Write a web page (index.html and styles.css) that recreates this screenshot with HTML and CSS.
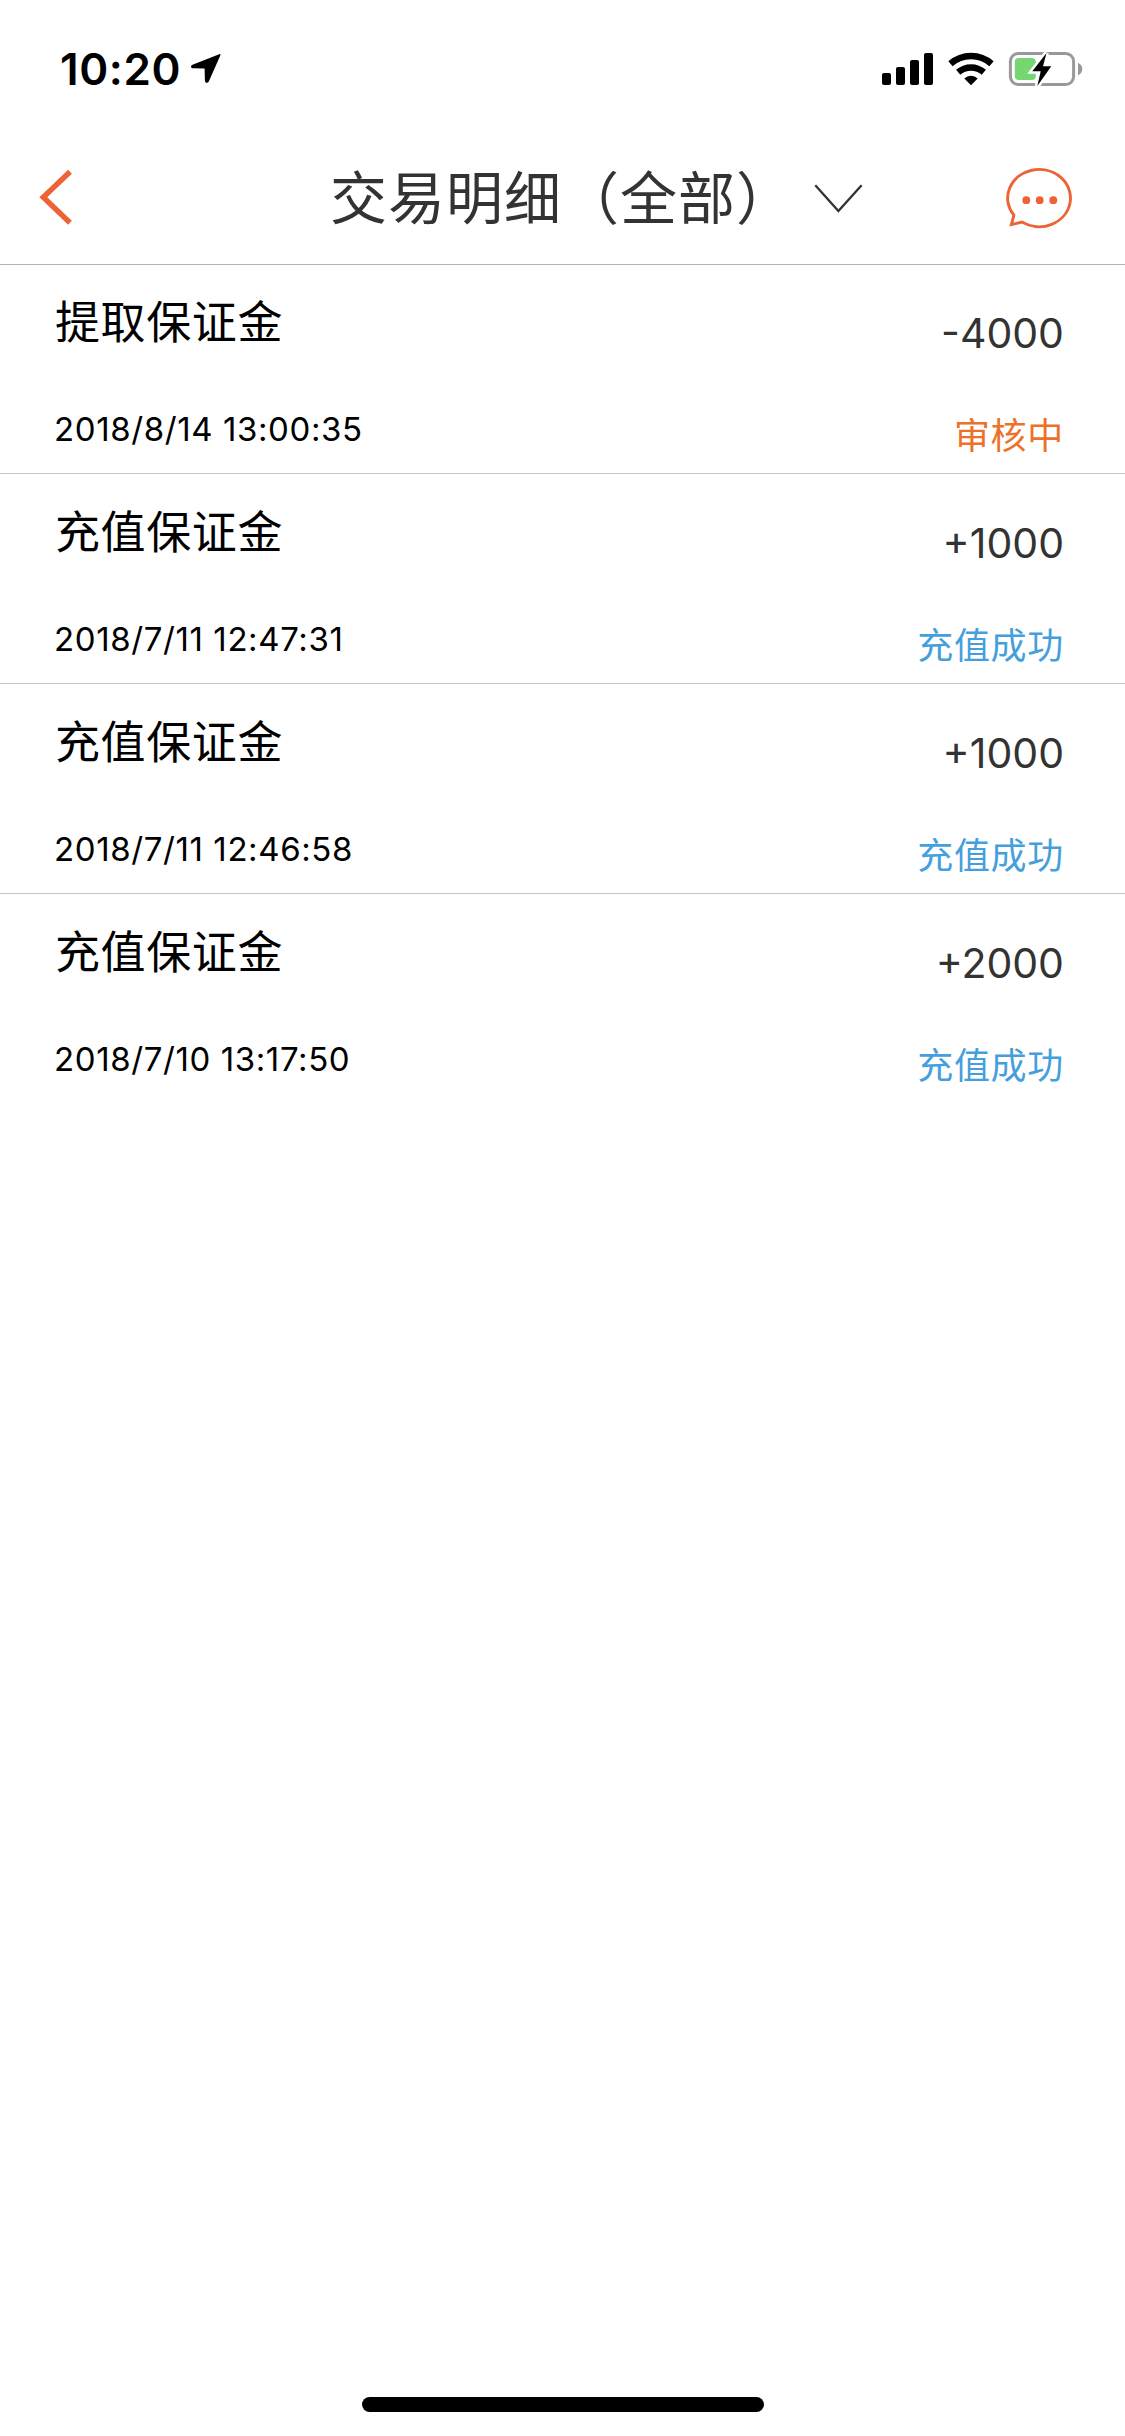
FILE: index.html
```html
<!DOCTYPE html>
<html lang="zh-CN">
<head>
<meta charset="utf-8">
<title>交易明细</title>
<link rel="stylesheet" href="styles.css">
</head>
<body>
<div class="screen">
  <div class="status-bar">
    <div class="clock">
      <span class="time">10:20</span>
      <svg class="location" width="32" height="32" viewBox="0 0 32 32"><path d="M29.2 1.2 2.5 11.8C.3 12.8.7 15.3 3 15.3L14.6 15.5 14.9 27.5C15 30.3 17.9 30.5 18.9 28.3L30.3 2.6C30.7 1.5 30.2.9 29.2 1.2Z"/></svg>
    </div>
    <svg class="indicators" width="206" height="36" viewBox="880 51 206 36">
      <rect x="882" y="73" width="9" height="12" rx="2"/>
      <rect x="896" y="67" width="9" height="18" rx="2"/>
      <rect x="910" y="60" width="9" height="25" rx="2"/>
      <rect x="924" y="53" width="9" height="32" rx="2"/>
      <g class="wifi">
        <path d="M950.5 63.8A31 31 0 0 1 991.5 63.8"/>
        <path d="M958.2 72.2A19.5 19.5 0 0 1 983.8 72.2"/>
      </g>
      <path d="M971 85.2 964.3 78.4A9.6 9.6 0 0 1 977.7 78.4Z"/>
      <rect class="battery-shell" x="1010.4" y="53.4" width="63.2" height="31.2" rx="8"/>
      <path class="battery-tip" d="M1078 62.7C1080.7 64 1082.3 66.2 1082.3 69S1080.7 74 1078 75.3Z"/>
      <rect class="battery-level" x="1014.8" y="58" width="21" height="22" rx="4"/>
      <path class="bolt" d="M1046.5 53 1032.3 71.2H1040.7L1037.3 86 1051.3 66.2H1043Z"/>
    </svg>
  </div>

  <header class="nav">
    <svg class="back" width="36" height="58" viewBox="38 168 36 58"><path d="M70 171.7 43.3 197.2 70 222.7"/></svg>
    <div class="nav-title">
      <h1>交易明细（全部）</h1>
      <svg class="chevron" width="50" height="32" viewBox="813 185 50 32"><path d="M815.3 187.2 838.4 213 861.6 187.2"/></svg>
    </div>
    <svg class="message" width="70" height="64" viewBox="1004 166 70 64">
      <path class="bubble" d="M1013.9 215.2A31.4 28.6 0 1 1 1022 222.1L1011.4 224.6Z"/>
      <circle cx="1026.3" cy="200.2" r="3.9"/><circle cx="1039.7" cy="200.2" r="3.9"/><circle cx="1053.3" cy="200.2" r="3.9"/>
    </svg>
  </header>

  <ul class="records">
    <li class="record">
      <div class="info"><span class="type">提取保证金</span><span class="date">2018/8/14 13:00:35</span></div>
      <div class="result"><span class="amount">-4000</span><span class="state pending">审核中</span></div>
    </li>
    <li class="record">
      <div class="info"><span class="type">充值保证金</span><span class="date">2018/7/11 12:47:31</span></div>
      <div class="result"><span class="amount">+1000</span><span class="state">充值成功</span></div>
    </li>
    <li class="record">
      <div class="info"><span class="type">充值保证金</span><span class="date">2018/7/11 12:46:58</span></div>
      <div class="result"><span class="amount">+1000</span><span class="state">充值成功</span></div>
    </li>
    <li class="record">
      <div class="info"><span class="type">充值保证金</span><span class="date">2018/7/10 13:17:50</span></div>
      <div class="result"><span class="amount">+2000</span><span class="state">充值成功</span></div>
    </li>
  </ul>

  <div class="home-indicator"></div>
</div>
</body>
</html>
```
FILE: styles.css
```css
* {
  box-sizing: border-box;
}

body {
  margin: 0;
  background: #fff;
  font-family: Inter, "Noto Sans CJK SC", sans-serif;
  color: #000;
}

.screen {
  display: flex;
  flex-direction: column;
  width: 1125px;
  height: 2436px;
  overflow: hidden;
}

svg {
  display: block;
  flex: none;
}

.status-bar {
  display: flex;
  justify-content: space-between;
  align-items: flex-start;
  height: 132px;
  padding: 51px 39px 0 60px;
}

.clock {
  display: flex;
  gap: 10px;
}

.time {
  width: 120px;
  font-size: 44px;
  font-weight: 600;
  line-height: 36px;
  letter-spacing: 0.6px;
  white-space: nowrap;
}

.location {
  margin-top: 2px;
}

.wifi {
  fill: none;
  stroke: #000;
  stroke-width: 6.5;
}

.battery-shell {
  fill: none;
  stroke: #999;
  stroke-width: 3;
}

.battery-tip {
  fill: #999;
}

.battery-level {
  fill: #76d672;
}

.bolt {
  stroke: #fff;
  stroke-width: 5;
  paint-order: stroke;
}

.nav {
  display: flex;
  align-items: flex-start;
  height: 133px;
  padding: 34px 51px 0 38px;
  border-bottom: 1px solid #b2b2b2;
}

.nav svg {
  fill: none;
  stroke: #ed6335;
}

.nav .back {
  margin-top: 2px;
  stroke-width: 5.4;
}

.nav-title {
  display: flex;
  margin-left: 256px;
}

h1 {
  width: 483px;
  margin: 1px 0 0;
  font-size: 57px;
  font-weight: 400;
  line-height: 64px;
  letter-spacing: 1px;
  color: #333;
  white-space: nowrap;
}

.nav .chevron {
  margin-top: 17px;
  stroke: #333;
  stroke-width: 2.3;
}

.nav .message {
  margin-left: auto;
}

.nav .bubble {
  stroke-width: 2.9;
}

.nav .message circle {
  fill: #ed6335;
  stroke: none;
}

.records {
  margin: -1px 0 0;
  padding: 0;
  list-style: none;
}

.record {
  display: flex;
  justify-content: space-between;
  height: 210px;
  padding: 34px 61px 0 54px;
  border-bottom: 1px solid #c6c6c6;
}

.record:last-child {
  border-bottom: 0;
}

.info,
.result {
  display: flex;
  flex-direction: column;
}

.result {
  align-items: flex-end;
}

.type {
  padding-left: 1px;
  font-size: 45px;
  line-height: 50px;
  letter-spacing: 0.6px;
}

.date {
  margin-top: 61px;
  font-size: 33px;
  line-height: 40px;
  letter-spacing: 0.6px;
}

.amount {
  margin-top: 10px;
  font-size: 41px;
  line-height: 50px;
  color: #333;
}

.state {
  margin-top: 58px;
  font-size: 36px;
  line-height: 40px;
  letter-spacing: 0.7px;
  color: #459fdc;
}

.pending {
  color: #ed7128;
}

.home-indicator {
  width: 402px;
  height: 15px;
  margin: auto auto 24px 362px;
  border-radius: 8px;
  background: #000;
}
```
